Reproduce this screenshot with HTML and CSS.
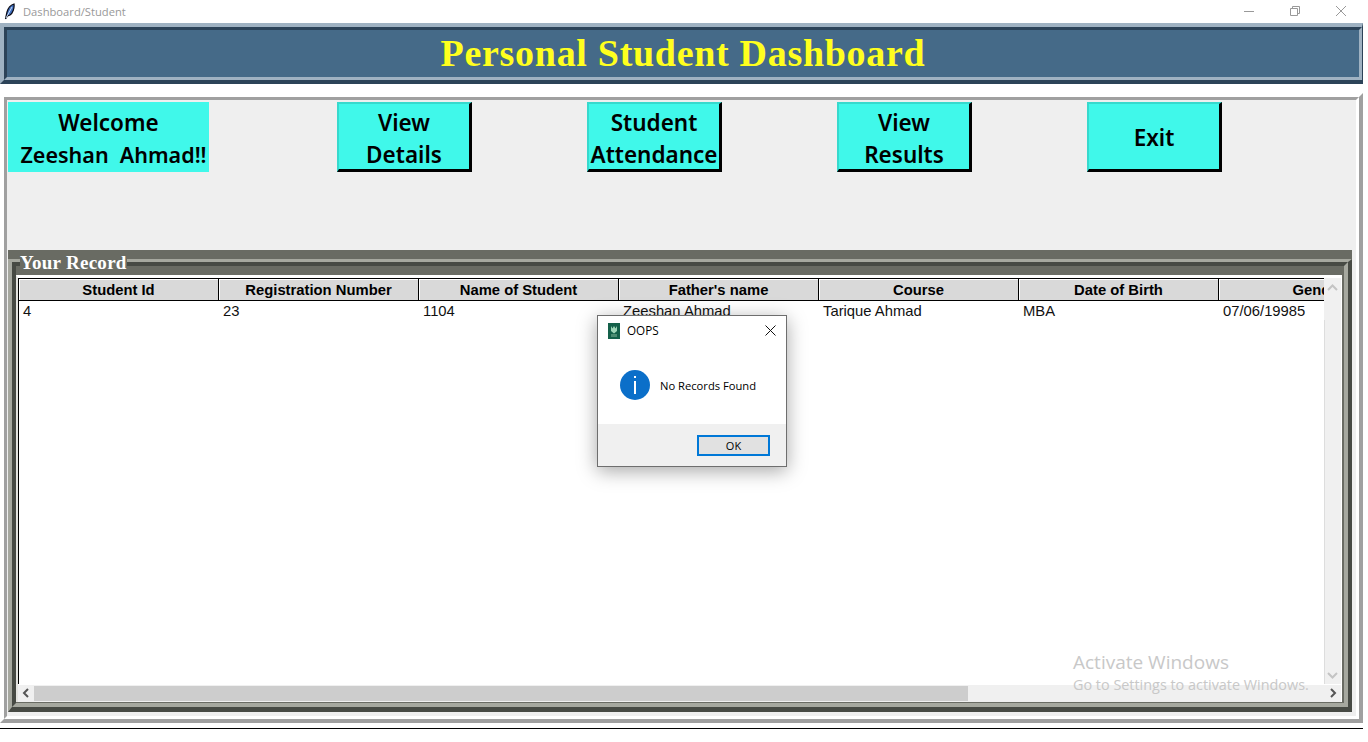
FILE: index.html
```html
<!DOCTYPE html>
<html lang="en">
<head>
<meta charset="utf-8">
<title>Dashboard/Student</title>
<link rel="stylesheet" href="styles.css">
</head>
<body>
<div class="window">
  <div class="titlebar">
    <svg class="feather" width="11" height="17" viewBox="0 0 11 17"><path d="M1.500 16 3 9C4 5 7 2 10 1 10.500 5 9 10 6 12L3.500 13Z" fill="#3f6fc0" stroke="#0a0a14" stroke-width="1.200"/><path d="M2 15 8 4" stroke="#c9dcf5" stroke-width="1" fill="none"/></svg>
    <span class="title-text">Dashboard/Student</span>
    <div class="win-controls">
      <svg width="10" height="10" viewBox="0 0 10 10"><path d="M0 5.500H10" stroke="#999" fill="none"/></svg>
      <svg width="10" height="10" viewBox="0 0 10 10"><path d="M.5 2.500H7.500V9.500H.5ZM2.500 2.500V.5H9.500V7.500H7.500" stroke="#999" fill="none"/></svg>
      <svg width="10" height="10" viewBox="0 0 10 10"><path d="M0 0 10 10M10 0 0 10" stroke="#999" fill="none"/></svg>
    </div>
  </div>

  <header class="header-outer">
    <div class="header-inner"><h1 class="app-title">Personal Student Dashboard</h1></div>
  </header>

  <main class="panel-outer">
    <div class="panel-inner">
      <div class="actions">
        <div class="welcome">Welcome<br><span class="welcome-name">Zeeshan&nbsp; Ahmad!!</span></div>
        <div class="btn-group">
          <button class="btn">View<br>Details</button>
          <button class="btn">Student<br>Attendance</button>
          <button class="btn">View<br>Results</button>
          <button class="btn btn-single">Exit</button>
        </div>
      </div>

      <section class="record">
        <div class="record-label">Your Record</div>
        <div class="groove-outer">
          <div class="groove-inner">
            <div class="tree">
              <div class="tree-main">
                <div class="tree-view">
                  <div class="rows">
                    <div class="row head">
                      <div class="cell">Student Id</div><div class="cell">Registration Number</div><div class="cell">Name of Student</div><div class="cell">Father's name</div><div class="cell">Course</div><div class="cell">Date of Birth</div><div class="cell">Gender</div>
                    </div>
                    <div class="row data">
                      <div class="cell">4</div><div class="cell">23</div><div class="cell">1104</div><div class="cell">Zeeshan Ahmad</div><div class="cell">Tarique Ahmad</div><div class="cell">MBA</div><div class="cell">07/06/19985</div>
                    </div>
                  </div>
                </div>
                <div class="vscroll">
                  <svg class="v-arrow" width="17" height="10" viewBox="0 0 17 10"><path d="M4 8 8.500 3.500 13 8" stroke="#c4c4c4" stroke-width="2" fill="none"/></svg>
                  <div class="v-line"></div>
                  <svg class="v-arrow v-arrow-down" width="17" height="10" viewBox="0 0 17 10"><path d="M4 2 8.500 6.500 13 2" stroke="#c4c4c4" stroke-width="2" fill="none"/></svg>
                </div>
              </div>
              <div class="hscroll">
                <div class="h-btn"><svg width="8" height="10" viewBox="0 0 8 10"><path d="M6 1 2 5 6 9" stroke="#555" stroke-width="2" fill="none"/></svg></div>
                <div class="h-track"><div class="h-thumb"></div></div>
                <div class="h-btn"><svg width="8" height="10" viewBox="0 0 8 10"><path d="M2 1 6 5 2 9" stroke="#555" stroke-width="2" fill="none"/></svg></div>
              </div>
            </div>
          </div>
        </div>
      </section>
    </div>
  </main>
  <div class="bottom-line"></div>
</div>

<div class="watermark">
  <div class="wm-big">Activate Windows</div>
  <div class="wm-small">Go to Settings to activate Windows.</div>
</div>

<div class="dialog">
  <div class="dlg-title">
    <svg class="dlg-icon" width="12" height="16" viewBox="0 0 12 16"><rect width="12" height="16" fill="#14614a"/><path d="M3 3 4.500 5.500 6 3 7.500 5.500 9 3V8L6 10.500 3 8Z" fill="#9fd6b8"/><rect x="3" y="11" width="6" height="3" fill="#4c8d72"/></svg>
    <span class="dlg-name">OOPS</span>
    <svg class="dlg-close" width="11" height="11" viewBox="0 0 11 11"><path d="M.5.500 10.500 10.500M10.500.500 .5 10.500" stroke="#111" fill="none"/></svg>
  </div>
  <div class="dlg-body">
    <svg width="30" height="30" viewBox="0 0 30 30"><circle cx="15" cy="15" r="15" fill="#0b6fc9"/><rect x="14" y="11" width="2" height="13" fill="#fff"/><rect x="14" y="6" width="2" height="2" fill="#fff"/></svg>
    <span class="dlg-msg">No Records Found</span>
  </div>
  <div class="dlg-foot"><button class="dlg-ok">OK</button></div>
</div>
</body>
</html>
```
FILE: styles.css
```css
* { box-sizing: border-box; }
html, body { margin: 0; padding: 0; background: #fff; }
body { position: relative; width: 1368px; height: 742px; overflow: hidden; font-family: "Liberation Sans", Arial, sans-serif; }
.window { width: 1363px; }

.titlebar { height: 23px; display: flex; align-items: center; background: #fff; }
.feather { margin-left: 4px; margin-top: -1px; }
.title-text { margin-left: 8px; font: 11.200px "Open Sans", sans-serif; color: #999; }
.win-controls { margin-left: auto; display: flex; gap: 36px; margin-right: 17px; margin-top: -2px; }

.header-outer { height: 61px; border-style: solid; border-width: 4px 1px 4px 4px; border-color: #9fb2c2 #2c4358 #2c4358 #9fb2c2; }
.header-inner { height: 100%; border-style: solid; border-width: 3px; border-color: #2c4358 #9fb2c2 #9fb2c2 #2c4358; background: #456a88; display: flex; align-items: center; justify-content: center; }
.app-title { margin: 0; font: bold 38px "Liberation Serif", serif; color: #ffff1e; letter-spacing: .7px; position: relative; top: -1px; left: 0; }

.panel-outer { margin-top: 9px; height: 630px; border-style: solid; border-width: 4px; border-color: #fff #a0a0a0 #a0a0a0 #fff; }
.panel-inner { height: 100%; border-style: solid; border-width: 3px; border-color: #a0a0a0 #fff #fff #a0a0a0; background: #efefef; padding: 2px 4px 4px 1px; display: flex; flex-direction: column; }

.actions { display: flex; height: 70px; }
.welcome { width: 201px; height: 70px; flex: none; background: #40f8ea; font: 600 22.500px/32px "Noto Sans", sans-serif; color: #000; text-align: center; padding-top: 5px; white-space: nowrap; }
.welcome-name { display: inline-block; font-size: 21.500px; margin-left: 10px; }
.btn-group { display: flex; gap: 115px; margin-left: 128px; }
.btn { width: 135px; height: 70px; padding: 3px 0 0; border-style: solid; border-width: 2px 3px 3px 2px; border-color: #37d9cd #000 #000 #37d9cd; background: #40f8ea; font: 600 22.500px/32px "Noto Sans", sans-serif; color: #000; white-space: nowrap; }
.btn-single { padding-top: 2px; }

.record { position: relative; margin-top: 78px; flex: 1; background: #696b63; padding-top: 9px; display: flex; }
.record-label { position: absolute; left: 12px; top: 2px; background: #696b63; color: #fff; font: bold 19px/22px "Liberation Serif", serif; letter-spacing: .28px; }
.groove-outer { flex: 1; border-style: solid; border-width: 3px 4px 5px 4px; border-color: #a6a89f #474a44 #474a44 #a6a89f; }
.groove-inner { height: 100%; border-style: solid; border-width: 4px; border-color: #474a44 #a6a89f #a6a89f #474a44; background: #696b63; padding: 9px 2px 1px 0; }
.tree { height: 100%; display: flex; flex-direction: column; background: #fff; border-style: solid; border-width: 3px 1px 0 2px; border-color: #fff #fff #fff #e4e4e0; }
.tree-main { flex: 1; display: flex; min-height: 0; }
.tree-view { width: 1306px; overflow: hidden; border-left: 1px solid #000; }
.rows { width: 1400px; }
.row { display: flex; }
.cell { width: 200px; flex: none; font-size: 14.800px; white-space: nowrap; }
.head { height: 23px; border-top: 1px solid #000; border-bottom: 1px solid #000; margin-left: -1px; }
.head .cell { height: 21px; line-height: 22px; background: #d9d9d9; font-weight: bold; text-align: center; border-left: 1px solid #000; box-shadow: inset 1px 1px 0 #fff; color: #000; }
.data .cell { height: 20px; line-height: 20px; padding-left: 4px; color: #111; }
.vscroll { width: 17px; background: #f0f0f0; display: flex; flex-direction: column; position: relative; }
.v-arrow { display: block; margin-top: 4px; flex: none; }
.v-arrow-down { position: absolute; bottom: 3px; left: 0; }
.v-line { width: 1px; flex: 1; margin-top: 28px; background: #ddd; }
.hscroll { height: 18px; flex: none; display: flex; background: #f0f0f0; border-top: 1px solid #fff; padding-bottom: 1px; }
.h-btn { width: 16px; display: flex; align-items: center; justify-content: center; flex: none; }
.h-track { flex: 1; }
.h-thumb { width: 934px; height: 15px; margin-top: 1px; background: #cdcdcd; }

.bottom-line { margin-top: 5px; height: 1px; background: #000; }

.watermark { position: absolute; left: 1073px; top: 650px; color: #c8c8c8; font-family: "Open Sans", sans-serif; white-space: nowrap; }
.wm-big { font-size: 19px; line-height: 25px; }
.wm-small { font-size: 14.400px; line-height: 20px; }

.dialog { position: absolute; left: 597px; top: 315px; width: 190px; height: 152px; background: #fff; border: 1px solid #6e6e6e; box-shadow: 0 4px 18px rgba(0,0,0,.35); display: flex; flex-direction: column; font-family: "Open Sans", sans-serif; color: #000; }
.dlg-title { height: 29px; display: flex; align-items: center; padding-left: 10px; flex: none; }
.dlg-name { margin: 0 0 2px 7px; font-size: 11.700px; }
.dlg-close { margin-left: auto; margin-right: 10px; }
.dlg-body { flex: 1; display: flex; align-items: center; padding: 0 0 0 22px; }
.dlg-msg { margin: 2px 0 0 10px; font-size: 11.200px; }
.dlg-foot { height: 42px; flex: none; background: #f0f0f0; display: flex; justify-content: flex-end; align-items: flex-start; padding: 11px 16px 0 0; }
.dlg-ok { width: 73px; height: 21px; padding: 0; background: #e1e1e1; border: 2px solid #0078d7; font: 11px "Open Sans", sans-serif; color: #000; }
```
